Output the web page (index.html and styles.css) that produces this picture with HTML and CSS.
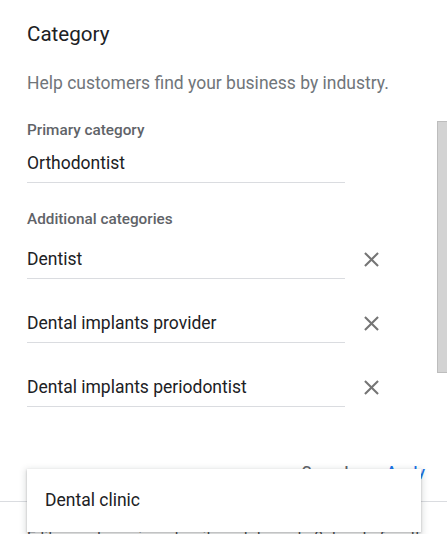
FILE: index.html
```html
<!DOCTYPE html>
<html lang="en">
<head>
<meta charset="utf-8">
<title>Category</title>
<link rel="stylesheet" href="styles.css">
</head>
<body>
<div class="page">
  <div class="top">
    <div class="main">
      <h2 class="title">Category</h2>
      <p class="subtitle">Help customers find your business by industry.</p>

      <div class="label label-primary">Primary category</div>
      <div class="row row-primary">
        <div class="field">Orthodontist</div>
      </div>

      <div class="label label-additional">Additional categories</div>
      <div class="row row-first">
        <div class="field">Dentist</div>
        <button class="remove" aria-label="Remove">
          <svg viewBox="0 0 24 24" width="25" height="25"><path d="M19 6.41L17.59 5 12 10.59 6.41 5 5 6.41 10.59 12 5 17.59 6.41 19 12 13.41 17.59 19 19 17.59 13.41 12z"/></svg>
        </button>
      </div>
      <div class="row">
        <div class="field">Dental implants provider</div>
        <button class="remove" aria-label="Remove">
          <svg viewBox="0 0 24 24" width="25" height="25"><path d="M19 6.41L17.59 5 12 10.59 6.41 5 5 6.41 10.59 12 5 17.59 6.41 19 12 13.41 17.59 19 19 17.59 13.41 12z"/></svg>
        </button>
      </div>
      <div class="row">
        <div class="field">Dental implants periodontist</div>
        <button class="remove" aria-label="Remove">
          <svg viewBox="0 0 24 24" width="25" height="25"><path d="M19 6.41L17.59 5 12 10.59 6.41 5 5 6.41 10.59 12 5 17.59 6.41 19 12 13.41 17.59 19 19 17.59 13.41 12z"/></svg>
        </button>
      </div>

      <div class="actions">
        <button class="btn btn-cancel">Cancel</button>
        <button class="btn btn-apply">Apply</button>
      </div>
    </div>
    <div class="track"><div class="thumb"></div></div>
  </div>
  <div class="footer">Edits may be reviewed so it can take up to 3 days before they are published.</div>

  <div class="menu">
    <div class="menu-item">Dental clinic</div>
  </div>
</div>
</body>
</html>
```
FILE: styles.css
```css
html, body {
  margin: 0;
  padding: 0;
  overflow: hidden;
  background: #ffffff;
}

.page {
  position: relative;
  width: 447px;
  height: 534px;
  overflow: hidden;
  font-family: Roboto, "Liberation Sans", Arial, sans-serif;
  color: #202124;
}

.top {
  display: flex;
}

.main {
  width: 437px;
  box-sizing: border-box;
  padding: 20px 0 11px 27px;
}

.title {
  margin: 0;
  font-size: 20.6px;
  line-height: 28px;
  font-weight: 400;
  color: #202124;
}

.subtitle {
  margin: 23px 0 0;
  font-size: 17.5px;
  line-height: 24px;
  color: #70757a;
}

.label {
  font-size: 15.3px;
  line-height: 20px;
  font-weight: 500;
  color: #5f6368;
}

.label-primary {
  margin-top: 25px;
}

.label-additional {
  margin-top: 26px;
}

.row {
  display: flex;
  align-items: flex-start;
  margin-top: 32px;
}

.row-primary {
  margin-top: 11px;
}

.row-first {
  margin-top: 18px;
}

.field {
  width: 318px;
  font-size: 17.5px;
  line-height: 24px;
  padding-bottom: 7px;
  border-bottom: 1px solid #dadce0;
  color: #202124;
}

.remove {
  margin: 0 0 0 14px;
  padding: 0;
  border: 0;
  background: none;
  width: 25px;
  height: 25px;
  display: block;
}

.remove svg {
  display: block;
  fill: #757575;
}

.actions {
  display: flex;
  justify-content: flex-end;
  gap: 22px;
  margin-top: 47px;
  padding-right: 4px;
}

.btn {
  height: 36px;
  padding: 0 8px;
  border: 0;
  background: none;
  font-family: Roboto, "Liberation Sans", Arial, sans-serif;
  font-size: 15.3px;
  line-height: 36px;
  font-weight: 500;
}

.btn-cancel {
  color: #5f6368;
}

.btn-apply {
  color: #1a73e8;
}

.track {
  width: 10px;
}

.thumb {
  margin-top: 121px;
  height: 252px;
  box-sizing: border-box;
  background: #d3d3d3;
  border: 1px solid #bdbdbd;
  border-right: 0;
}

.footer {
  border-top: 1px solid #dadce0;
  padding: 25px 0 0 27px;
  font-size: 15.3px;
  line-height: 20px;
  color: #3c4043;
  white-space: nowrap;
}

.menu {
  position: absolute;
  top: 469px;
  left: 27px;
  width: 394px;
  box-sizing: border-box;
  padding: 7px 0 8px;
  background: #ffffff;
  box-shadow: 0 1px 2px rgba(60, 64, 67, 0.3), 0 2px 6px 2px rgba(60, 64, 67, 0.15);
}

.menu-item {
  height: 48px;
  line-height: 48px;
  padding-left: 18px;
  font-size: 17.5px;
  color: #202124;
}
```
